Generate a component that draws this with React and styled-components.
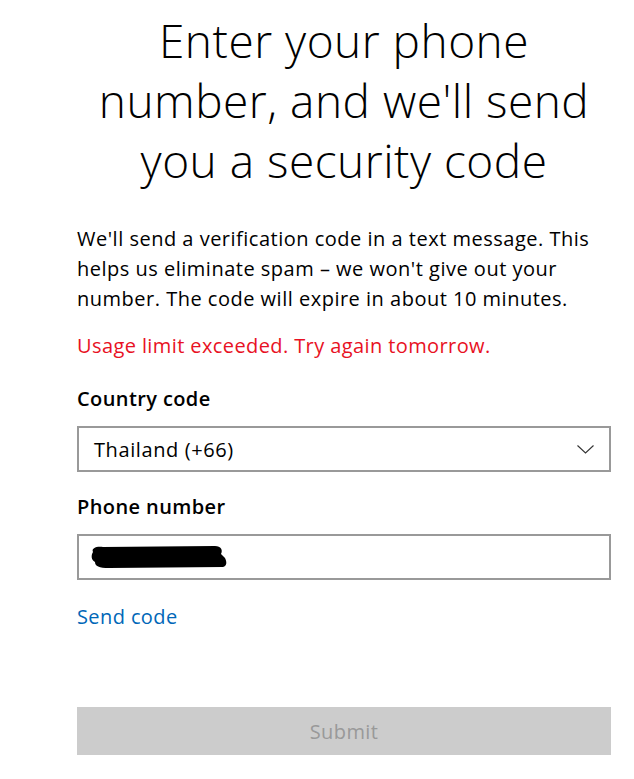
import React from 'react';
import styled, { createGlobalStyle } from 'styled-components';

const Global = createGlobalStyle`
	body {
		margin: 0;
		background: #fff;
		font-family: 'Open Sans', 'Noto Sans', sans-serif;
		color: #1b1b1b;
	}
`;

const Page = styled.div`
	width: 534px;
	padding: 10px 0 0 77px;
`;

const Title = styled.h1`
	margin: 0;
	font-weight: 300;
	font-size: 46px;
	letter-spacing: 0.5px;
	line-height: 60px;
	text-align: center;
	color: #000;
`;

const Lead = styled.p`
	margin: 34px 0 0;
	font-size: 20px;
	letter-spacing: 0.5px;
	line-height: 30px;
	color: #000;
`;

const Error = styled.div`
	margin-top: 17px;
	font-size: 20px;
	letter-spacing: 0.4px;
	line-height: 30px;
	color: #e81123;
`;

const Label = styled.div`
	margin-top: ${(p) => p.gap || '21px'};
	font-size: 20px;
	font-weight: 600;
	letter-spacing: 0.4px;
	line-height: 30px;
	color: #000;
`;

const Field = styled.div`
	margin-top: ${(p) => p.top || '12px'};
	height: ${(p) => p.h || '46px'};
	box-sizing: border-box;
	border: 2px solid #999;
	display: flex;
	align-items: center;
	justify-content: space-between;
	padding: 0 15px 0 ${(p) => p.left || '15px'};
	font-size: 20px;
	letter-spacing: 0.6px;
	color: #000;
`;

const Link = styled.a`
	display: block;
	margin-top: 22px;
	font-size: 20px;
	letter-spacing: 0.4px;
	line-height: 30px;
	color: #0067b8;
	text-decoration: none;
`;

const Submit = styled.button`
	display: block;
	width: 100%;
	margin-top: 75px;
	height: 48px;
	border: none;
	background: #ccc;
	color: #999;
	font-family: inherit;
	font-size: 20px;
	letter-spacing: 0.4px;
`;

const Chevron = () => (
	<svg width="17" height="9" viewBox="0 0 17 9">
		<path d="M0.5 0.5 L8.5 8 L16.5 0.5" fill="none" stroke="#333" strokeWidth="1.1" />
	</svg>
);

const Redaction = () => (
	<svg width="140" height="26" viewBox="0 0 140 26">
		<path
			d="M4 8 C2 4 8 2 14 3 L126 2 C132 2 134 6 132 10 L136 14 C138 18 138 22 134 23 L20 24 C10 24 6 22 6 18 C2 16 2 11 4 8 Z"
			fill="#000"
		/>
	</svg>
);

const App = () => (
	<Page>
		<Global />
		<Title>
			Enter your phone
			<br />
			number, and we'll send
			<br />
			you a security code
		</Title>
		<Lead>
			We'll send a verification code in a text message. This
			<br />
			helps us eliminate spam – we won't give out your
			<br />
			number. The code will expire in about 10 minutes.
		</Lead>
		<Error>Usage limit exceeded. Try again tomorrow.</Error>
		<Label gap="23px">Country code</Label>
		<Field h="46px">
			<span>Thailand (+66)</span>
			<Chevron />
		</Field>
		<Label gap="20px">Phone number</Label>
		<Field left="10px">
			<Redaction />
		</Field>
		<Link href="#">Send code</Link>
		<Submit disabled>Submit</Submit>
	</Page>
);

export default App;
